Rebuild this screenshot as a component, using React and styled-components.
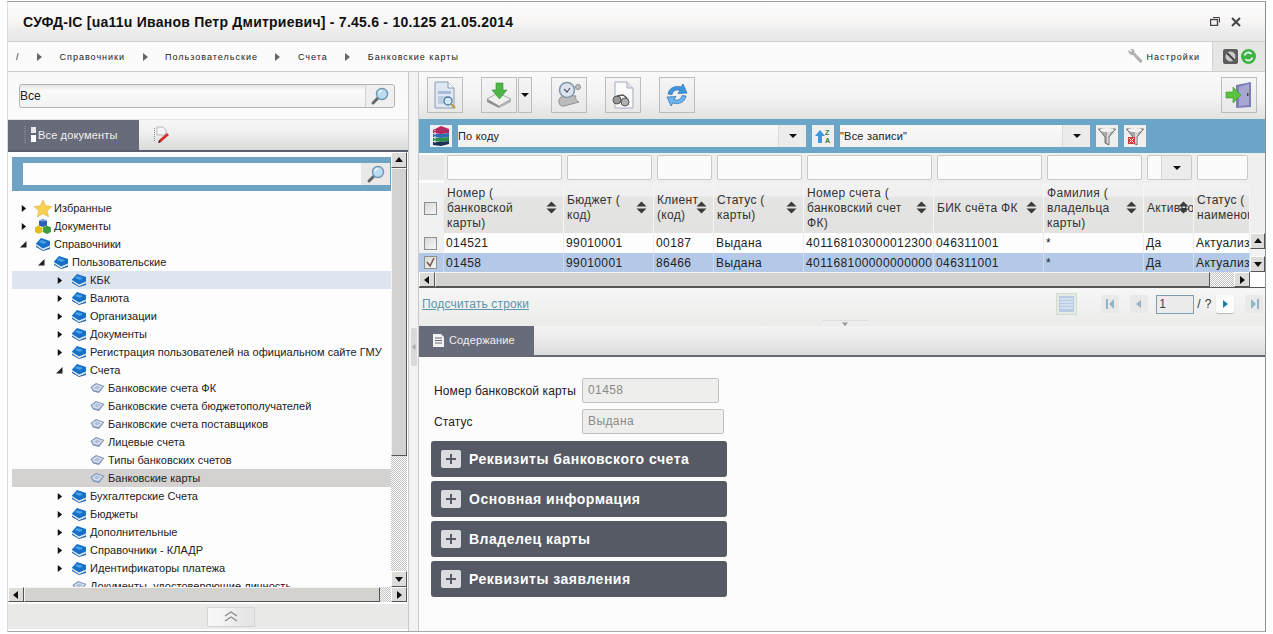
import React from 'react';
import styled, { createGlobalStyle } from 'styled-components';

const Global = createGlobalStyle`
  html, body { margin: 0; padding: 0; background: #fff; overflow: hidden; }
  body { font-family: "Liberation Sans", Arial, sans-serif; font-size: 11px; color: #222; }
`;

const Page = styled.div`
  width: 1273px; height: 634px; box-sizing: border-box;
  padding: 1px 7px 2px 7px; background: #fdfeff;
  border-left: 0; display: flex;
`;
const Win = styled.div`
  width: 1259px; display: flex; flex-direction: column;
  border-top: 1px solid #9a9fa3; border-right: 1px solid #8b8f92; border-bottom: 1px solid #a4a8a8;
  border-left: 1px solid #dcdcdc; box-sizing: border-box;
`;
const TitleBar = styled.div`
  height: 39px; flex: none; display: flex; align-items: center; justify-content: space-between;
  padding: 0 24px 0 15px; border-bottom: 1px solid #cfcfcf;
  background: linear-gradient(#fbfbfb 0, #f9f7f6 45%, #ececec 75%, #e7e7e7 100%);
`;
const Title = styled.div`
  font-size: 14px; font-weight: bold; color: #111; letter-spacing: .24px;
`;
const WinControls = styled.div` display: flex; align-items: center; gap: 11px; `;
const CrumbBar = styled.div`
  height: 30px; flex: none; display: flex; align-items: center;
  background: #fbfbfb; border-bottom: 1px solid #cdcdcd; box-sizing: border-box;
  padding-left: 8px;
`;
const Crumbs = styled.div` display: flex; align-items: center; gap: 17.5px; flex: 1; `;
const Crumb = styled.span` font-size: 9px; letter-spacing: 1px; color: #222; `;
const CrumbArrow = styled.i`
  width: 0; height: 0; border-left: 5px solid #666; border-top: 4px solid transparent; border-bottom: 4px solid transparent;
`;
const SettingsLink = styled.div`
  display: flex; align-items: center; gap: 3px; font-size: 9px; letter-spacing: 1.05px; margin-right: 12px;
`;
const StatusCell = styled.div`
  width: 52px; height: 29px; display: flex; align-items: center; justify-content: center; gap: 3px;
  background: #e6e6e4; border-left: 1px solid #d2d2d2;
`;

const Main = styled.div` flex: 1; display: flex; min-height: 0; `;
const LeftPanel = styled.div` width: 400px; flex: none; display: flex; flex-direction: column; background: #fdfdfd; `;
const LeftSearch = styled.div` height: 48px; flex: none; box-sizing: border-box; padding: 12px 13px 0 11px; background: linear-gradient(#f8f8f8, #fbfbfb); border-bottom: 1px solid #e4e4e4; `;
const SearchBox = styled.div`
  height: 24px; display: flex; box-sizing: border-box; border: 1px solid #b4b4b4; border-radius: 3px; overflow: hidden;
  background: linear-gradient(#e4e4e4, #fafafa 25%, #f2f2f2);
`;
const SearchText = styled.div` flex: 1; padding-left: 0; line-height: 22px; font-size: 12px; color: #222; `;
const SearchBtn = styled.div`
  width: 28px; display: flex; align-items: center; justify-content: center; background: #efefef; border-left: 1px solid #cfcfcf;
`;
const TabBar = styled.div`
  height: 32px; flex: none; display: flex; box-sizing: border-box; border-bottom: 2px solid #5b5f6b;
  background: linear-gradient(#f6f6f6, #efefef 45%, #d9d9d9);
`;
const ActiveTab = styled.div`
  width: ${p => p.$w}px; display: flex; align-items: center; gap: ${p => p.$gap}px; padding-left: ${p => p.$pad}px; padding-bottom: 1px; box-sizing: border-box;
  background: #686c7a; color: #f0f0f0; font-size: 11px; letter-spacing: .15px;
`;
const IdleTab = styled.div` width: 40px; display: flex; align-items: center; justify-content: center; margin-left: 2px; `;
const TreeWrap = styled.div` flex: 1; min-height: 0; display: flex; padding: 0 1px 0 4px; `;
const TreePane = styled.div` flex: 1; min-width: 0; display: flex; flex-direction: column; overflow: hidden; padding-top: 5px; `;
const TreeFilter = styled.div`
  height: 34px; flex: none; background: #6fa3c4; padding: 6px 1px 6px 11px; box-sizing: border-box; display: flex;
`;
const TreeInput = styled.div` flex: 1; background: #fdfdfd; `;
const TreeBtn = styled.div` width: 29px; background: #e9e9e9; display: flex; align-items: center; justify-content: center; `;
const TreeList = styled.div` flex: 1; padding-top: 8px; overflow: hidden; `;
const TreeRow = styled.div`
  height: 18px; display: flex; align-items: center; white-space: nowrap; font-size: 11px; letter-spacing: .03px; color: #222;
  padding-left: ${p => 6 + p.$level * 18}px;
  background: ${p => (p.$mark === 'hover' ? '#dce5f0' : p.$mark === 'sel' ? '#d3d2d0' : 'transparent')};
`;
const Toggle = styled.div` width: 10px; flex: none; display: flex; align-items: center; padding-left: 2px; box-sizing: border-box; `;
const NodeIcon = styled.div` width: 18px; margin-left: 6px; margin-right: 2px; flex: none; display: flex; align-items: center; justify-content: center; `;

const VBar = styled.div` width: ${p => p.$w}px; flex: none; display: flex; flex-direction: column; `;
const HBar = styled.div` height: 15px; flex: none; display: flex; `;
const ScrollBtn = styled.div`
  width: ${p => p.$w || 16}px; height: ${p => p.$h || 16}px; flex: none; display: flex; align-items: center; justify-content: center;
  background: #dedcd8; border-right: 1px solid #555; border-bottom: 1px solid #555; border-top: 1px solid #fff; border-left: 1px solid #fff; box-sizing: border-box;
`;
const Thumb = styled.div`
  flex: ${p => p.$size}; min-width: 0; min-height: 0; background: #d3d2cf;
  border-right: 1px solid #555; border-bottom: 1px solid #555; border-top: 1px solid #f4f4f4; border-left: 1px solid #f4f4f4; box-sizing: border-box;
`;
const Hatch = styled.div`
  flex: ${p => p.$size}; min-width: 0; min-height: 0;
  background: repeating-conic-gradient(#c4c4c4 0 25%, #fafafa 0 50%) 0 0 / 2px 2px;
`;
const Corner = styled.div` flex: 1; background: #fff; `;
const LeftFooter = styled.div`
  height: 25px; flex: none; display: flex; align-items: center; background: #e9e9e8; padding-left: 199px; margin: 2px 0;
`;
const Collapse = styled.div`
  width: 48px; height: 20px; box-sizing: border-box; border: 1px solid #d5d5d5; background: linear-gradient(90deg, #f8f8f8, #f4f4f4 30%, #e6e6e6 80%);
  display: flex; align-items: center; justify-content: center;
`;

const Splitter = styled.div`
  width: 10px; flex: none; display: flex; align-items: center; box-sizing: border-box;
  background: #f2f2f2; border-left: 1px solid #c9c9c9;
`;
const SplitHandle = styled.div`
  width: 6px; height: 38px; margin: 0 auto 10px; background: #d9d9d9; border-radius: 2px; display: flex; align-items: center; justify-content: center;
`;

const RightPanel = styled.div` flex: 1; min-width: 0; display: flex; flex-direction: column; background: #fcfcfc; border-left: 1px solid #c9c9c9; `;
const Toolbar = styled.div`
  height: 47px; flex: none; box-sizing: border-box; padding: 5px 8px 0 8px; display: flex; gap: 18px;
  background: linear-gradient(#f9f9f9, #f3f3f3 55%, #e2e2e2);
`;
const ToolBtn = styled.div`
  width: 36px; height: 36px; box-sizing: border-box; border: 1px solid #bdbdbd; display: flex; align-items: center; justify-content: center;
  background: linear-gradient(#f5f5f5, #e8e8e8);
  margin-left: ${p => (p.$end ? 'auto' : '0')};
`;
const SplitGroup = styled.div` display: flex; gap: 1px; margin-right: 1px; `;
const DropBtn = styled(ToolBtn)` width: 14px; `;
const Caret = styled.i`
  width: 0; height: 0; border-top: 4px solid #111; border-left: 4px solid transparent; border-right: 4px solid transparent;
`;
const BlueBar = styled.div`
  height: 34px; flex: none; box-sizing: border-box; background: #6ba5c8; padding: 6px 0 0 11px; display: flex; gap: 6px;
`;
const BlueBtn = styled.div`
  width: 22px; height: 22px; flex: none; background: #efefef; display: flex; align-items: center; justify-content: center;
`;
const Combo = styled.div`
  width: ${p => p.$w}px; height: 22px; flex: none; display: flex; background: linear-gradient(#fafafa, #f0f0f0);
`;
const ComboText = styled.div` flex: 1; line-height: 22px; font-size: 11px; letter-spacing: .2px; white-space: nowrap; color: #222; padding-left: 0; `;
const ComboArrow = styled.div`
  width: 27px; display: flex; align-items: center; justify-content: center; background: #ececec; border-left: 1px solid #d8d8d8;
`;

const TableArea = styled.div` display: flex; flex: none; `;
const Grid = styled.div`
  width: 831px; display: grid; grid-template-columns: 25px 120px 90px 60px 90px 130px 110px 100px 50px 56px;
  grid-template-rows: 30px 50px 20px 19px;
`;
const FilterCell = styled.div`
  background: #efefef; padding: 2px 2px 3px 3px; box-sizing: border-box; min-width: 0;
`;
const FilterStub = styled.div` background: #e9e9e9; margin-top: 2px; margin-bottom: 3px; `;
const FilterInput = styled.div`
  height: 100%; box-sizing: border-box; background: #fbfbfb; border: 1px solid #c9c9c9; border-radius: 2px; display: flex; justify-content: flex-end; overflow: hidden;
`;
const FilterArrow = styled.div`
  width: 29px; display: flex; align-items: center; justify-content: center; background: #ececec; border-left: 1px solid #d4d4d4;
`;
const HeadCell = styled.div`
  position: relative; box-sizing: border-box; min-width: 0; overflow: hidden; display: flex; align-items: center;
  padding: 0 ${p => (p.$tight ? 0 : 16)}px 0 3px; white-space: pre-line; font-size: 12px; line-height: 15px; letter-spacing: .3px; color: #333;
  background: linear-gradient(#f2f2f2, #efefef 25%, #e4e4e2 30%, #e2e2e0); border-right: 1px solid #f6f6f6;
`;
const SortMark = styled.svg` position: absolute; right: ${p => p.$right}px; top: 18px; `;
const Cell = styled.div`
  box-sizing: border-box; min-width: 0; overflow: hidden; white-space: nowrap; display: flex; align-items: center;
  padding-left: 2px; font-size: 12px; letter-spacing: .4px; color: #222;
  background: ${p => (p.$sel ? '#b4c9e8' : '#fdfdfd')}; border-right: 1px solid ${p => (p.$sel ? '#cddcf0' : '#ededed')};
`;
const CheckCell = styled(Cell)` justify-content: center; padding: 0 2px 0 0; background: ${p => (p.$sel ? '#b4c9e8' : '#f1f1f1')}; `;
const Check = styled.div`
  width: 13px; height: 13px; box-sizing: border-box; border: 1px solid #8f8f8f; background: linear-gradient(135deg, #d8d8d8, #f6f6f6);
  display: flex; align-items: center; justify-content: center;
`;
const SideSpacer = styled.div` height: 80px; background: #efefef; flex: none; `;
const RowScroll = styled.div` flex: 1; display: flex; flex-direction: column; justify-content: space-between; background: #f2f2f2; `;
const HBarWrap = styled.div` height: 15px; flex: none; display: flex; border-bottom: 1px solid #555; box-sizing: content-box; `;
const HBarTrack = styled.div` width: 831px; display: flex; flex: none; `;
const PagerBar = styled.div`
  height: 38px; flex: none; box-sizing: border-box; display: flex; align-items: center; padding: 0 2px 6px 3px; position: relative;
  background: linear-gradient(#f6f6f6, #ebebe9);
`;
const CountLink = styled.span` font-size: 12px; letter-spacing: .15px; color: #5b95ae; text-decoration: underline; `;
const Pager = styled.div` margin-left: auto; display: flex; align-items: center; `;
const ListBtn = styled.div`
  width: 21px; height: 22px; box-sizing: border-box; margin-right: 24px; background: #e4ebe2; border: 1px solid #d4dcd2; display: flex; align-items: center; justify-content: center;
`;
const PageBtn = styled.div`
  width: 18px; height: 18px; display: flex; align-items: center; justify-content: center; margin-left: ${p => p.$gap}px; border-radius: 2px;
  background: ${p => (p.$on ? '#fdfdfd' : '#e9e9e9')}; box-shadow: ${p => (p.$on ? '0 1px 1px #bbb' : 'none')};
`;
const PageInput = styled.div`
  width: 38px; height: 19px; box-sizing: border-box; margin-left: 8px; border: 1px solid #7f9db5; background: #ececec; font-size: 12px; line-height: 17px; padding-left: 2px; color: #444;
`;
const PageOf = styled.span` font-size: 12px; margin-left: 3px; color: #333; letter-spacing: .5px; `;
const PaneHandle = styled.div`
  position: absolute; left: 403px; bottom: 0; width: 46px; height: 5px; background: #ededed; border-top: 1px solid #ddd; display: flex; justify-content: center;
`;
const ContentTabs = styled(TabBar)` height: 31px; border-bottom: 2px solid #666a76; background: linear-gradient(#f3f3f3, #ececec 40%, #dcdcdc); `;
const Content = styled.div` flex: 1; padding: 21px 0 0 12px; background: #fcfcfc; `;
const FormRow = styled.div` display: flex; align-items: center; margin-bottom: 6px; height: 25px; `;
const FormLabel = styled.div` width: 151px; padding-left: 3px; box-sizing: border-box; font-size: 12px; letter-spacing: .12px; color: #222; flex: none; `;
const FormInput = styled.div`
  width: ${p => p.$w}px; height: 25px; box-sizing: border-box; background: #eeeeec; border: 1px solid #c0c0c0; border-radius: 2px;
  font-size: 12px; letter-spacing: .4px; color: #8a8a8a; line-height: 23px; padding-left: 5px;
`;
const Sections = styled.div` display: flex; flex-direction: column; gap: 4px; width: 296px; margin-top: 7px; `;
const Section = styled.div`
  height: 36px; display: flex; align-items: center; gap: 8px; padding-left: 10px; background: #555a64; border-radius: 3px;
  color: #fff; font-weight: bold; font-size: 14px; letter-spacing: .5px;
`;
const Plus = styled.div`
  width: 20px; height: 18px; border-radius: 2px; background: #dadce0; display: flex; align-items: center; justify-content: center;
`;

/* drawings */
const Arrow = ({ dir = 'r', c = '#111', s = 8 }) => {
  const p = { r: '2,0 7,4 2,8', l: '6,0 1,4 6,8', u: '0,6 4,1 8,6', d: '0,2 4,7 8,2' }[dir];
  return <svg width={s} height={s} viewBox="0 0 8 8"><polygon points={p} fill={c} /></svg>;
};
const OpenArrow = () => <svg width="7" height="7" viewBox="0 0 7 7"><polygon points="0,6.5 6.5,6.5 6.5,0" fill="#222" /></svg>;
const Lens = ({ s = 20 }) => (
  <svg width={s} height={s} viewBox="0 0 20 20">
    <path d="M9 11 3 17" stroke="#666" strokeWidth="3" strokeLinecap="round" />
    <circle cx="12" cy="8" r="5.5" fill="#bcdcf2" stroke="#6f97b2" strokeWidth="1.4" />
    <path d="M9 7a3.5 3.5 0 0 1 3-2.5" stroke="#fff" strokeWidth="1.3" fill="none" />
  </svg>
);
const Star = () => <svg width="18" height="17" viewBox="0 0 18 17"><polygon points="9,0 11.6,5.8 18,6.5 13.2,10.7 14.6,17 9,13.7 3.4,17 4.8,10.7 0,6.5 6.4,5.8" fill="#f8cf52" stroke="#e0b040" strokeWidth=".6" /></svg>;
const Cubes = () => (
  <svg width="16" height="15" viewBox="0 0 16 15">
    <polygon points="8,0 12,2 12,6.500 8,8 4,6.500 4,2" fill="#2f5fb5" />
    <polygon points="8,2.500 4,1.500 8,0 12,1.500" fill="#7ea3e0" />
    <polygon points="3.500,6.500 7.500,8.500 7.500,13 3.500,15 0,13 0,8.500" fill="#e2bd22" />
    <polygon points="12,6.500 16,8.500 16,13 12,15 8,13 8,8.500" fill="#3f9e3c" />
  </svg>
);
const Book = () => (
  <svg width="16" height="14" viewBox="0 0 16 14">
    <polygon points="1,8 8,13 15,10 15,12 8,14 1,10" fill="#2b6aa8" />
    <polygon points="1,7 8,11.500 15,8.500 15,10 8,13 1,8.500" fill="#dde6ee" />
    <polygon points="1,6.500 6,1 15,4 15,8.500 8,11.500 1,7" fill="#1670c8" />
    <polygon points="6,3 12,5 9,7 4,5" fill="#4aa0e8" />
  </svg>
);
const OpenBook = () => (
  <svg width="15" height="12" viewBox="0 0 15 12">
    <polygon points="0.5,5 6,1 14.5,4 9,11 3,9.5" fill="#7f93b8" />
    <polygon points="2,5 6.5,2.2 13,4.5 8.5,9.300 3.5,8" fill="#d2dcec" />
    <path d="M4.5 5.5 8 6.5M6 4.5 10 5.5" stroke="#8ea2c2" strokeWidth=".8" />
  </svg>
);
const Restore = () => (
  <svg width="10" height="9" viewBox="0 0 10 9" fill="none" stroke="#444">
    <rect x=".5" y="2.5" width="7" height="6" strokeWidth="1.4" />
    <path d="M3 .5h6.5v5" />
  </svg>
);
const Cross = () => <svg width="10" height="10" viewBox="0 0 10 10"><path d="M1 1 9 9M9 1 1 9" stroke="#444" strokeWidth="2" /></svg>;
const Wrench = () => (
  <svg width="15" height="15" viewBox="0 0 15 15">
    <path d="M1 1.5 3 3.5 4.5 2 2.8.3C5-.4 6.5 1.4 6 3.5L13.5 11c1 1 0 3-1.6 2.3L5 5.5C3 6.3.4 4.3 1 1.5Z" fill="#b5b5b5" stroke="#8a8a8a" strokeWidth=".5" />
  </svg>
);
const StopIcon = () => (
  <svg width="15" height="15" viewBox="0 0 15 15">
    <rect width="15" height="15" rx="2" fill="#5c5c5c" />
    <circle cx="7.5" cy="7.5" r="5" fill="#c9c9c9" />
    <path d="M4 4 11 11" stroke="#444" strokeWidth="2" />
  </svg>
);
const GreenSync = () => (
  <svg width="15" height="15" viewBox="0 0 15 15">
    <circle cx="7.5" cy="7.5" r="7.5" fill="#3cb53f" />
    <path d="M3.5 6.5a4 4 0 0 1 7-1.5M11.5 8.5a4 4 0 0 1-7 1.5" stroke="#eef" strokeWidth="1.8" fill="none" />
  </svg>
);
const TabPages = () => (
  <svg width="14" height="20" viewBox="0 0 14 20">
    <path d="M2 1v18" stroke="#999" strokeDasharray="1 1" />
    <rect x="8" y="2" width="5" height="6" fill="#e8e8e8" />
    <rect x="8" y="10" width="5" height="7" fill="#fff" />
  </svg>
);
const TabEdit = () => (
  <svg width="16" height="18" viewBox="0 0 16 18">
    <path d="M1.5 2v14" stroke="#888" strokeDasharray="1 1" />
    <path d="M4 1h6l3 3v5H4Z" fill="#f4f4f4" stroke="#bbb" />
    <path d="M14 7 6 14l-1 3 3-1 8-7Z" fill="#d63030" />
    <path d="M5 17l1.4-2.6L8 16Z" fill="#222" />
  </svg>
);
const DocLens = () => (
  <svg width="24" height="28" viewBox="0 0 24 28">
    <path d="M2 1h13l6 6v20H2Z" fill="#dfe7f2" stroke="#8c9db4" />
    <path d="M15 1v6h6" fill="#f4f6fa" stroke="#8c9db4" />
    <rect x="5" y="10" width="13" height="3" fill="#a8bcd6" />
    <rect x="5" y="15" width="8" height="8" fill="#bccde2" />
    <circle cx="15" cy="20" r="4" fill="#d2e7f6" stroke="#4f7aa0" strokeWidth="1.3" />
    <path d="M18 23 22 27" stroke="#b89a3e" strokeWidth="2" />
  </svg>
);
const Download = () => (
  <svg width="26" height="26" viewBox="0 0 26 26">
    <polygon points="1,17 12,11 25,17 13,24" fill="#efefef" stroke="#aaa" />
    <polygon points="1,17 13,24 13,26 1,20" fill="#8f8f8f" />
    <polygon points="13,24 25,17 25,20 13,26" fill="#b0b0b0" />
    <polygon points="10,1 17,1 17,8 21,8 13.5,17 6,8 10,8" fill="#4fb548" stroke="#3b8f35" strokeWidth=".6" />
  </svg>
);
const ScrollClock = () => (
  <svg width="26" height="28" viewBox="0 0 26 28">
    <path d="M4 17c-3 4 0 9 4 8l15-4c-3-1-4-4-3-6L8 14Z" fill="#bcbcbc" stroke="#8f8f8f" />
    <circle cx="11" cy="9" r="7.5" fill="#dbe4ee" stroke="#8496a8" strokeWidth="1.6" />
    <path d="M8 8l3 3 3-4" stroke="#556" strokeWidth="1.2" fill="none" />
    <circle cx="22" cy="6" r="2.5" fill="#c0c0c0" stroke="#8f8f8f" />
  </svg>
);
const DocGlasses = () => (
  <svg width="24" height="28" viewBox="0 0 24 28">
    <path d="M4 1h12l6 6v20H4Z" fill="#fafafa" stroke="#a3adba" />
    <path d="M16 1v6h6" fill="#e4e8ee" stroke="#a3adba" />
    <circle cx="6" cy="19" r="4" fill="#9a9a9a" stroke="#555" />
    <circle cx="14" cy="21" r="4" fill="#b0b0b0" stroke="#555" />
    <path d="M6 15 12 14 16 17" stroke="#555" strokeWidth="1.5" fill="none" />
  </svg>
);
const Refresh = () => (
  <svg width="26" height="26" viewBox="0 0 26 26" fill="none">
    <path d="M4 12C5 6 11 3 17 5l2-3 4 9-9 .5 2-3c-4-1.500-7 0-8 4Z" fill="#3f96dd" stroke="#2a6fae" strokeWidth=".7" />
    <path d="M22 14c-1 6-7 9-13 7l-2 3-4-9 9-.5-2 3c4 1.500 7 0 8-4Z" fill="#6db4ec" stroke="#2a6fae" strokeWidth=".7" />
  </svg>
);
const ExitDoor = () => (
  <svg width="28" height="28" viewBox="0 0 28 28">
    <polygon points="11,4 26,1 26,26 11,27" fill="#7d7fb5" />
    <polygon points="14,6 24,3 24,24 14,25" fill="#a6a8d0" />
    <rect x="22" y="12" width="1.500" height="3" fill="#444" />
    <polygon points="1,11 8,11 8,6 16,14 8,22 8,17 1,17" fill="#58c33f" stroke="#3a962a" strokeWidth=".6" />
  </svg>
);
const Stack = () => (
  <svg width="18" height="20" viewBox="0 0 18 20">
    <polygon points="1,4 9,0 17,3 17,7 9,8 1,7" fill="#b02a5e" />
    <polygon points="1,8 9,8 17,7 17,11 9,12 1,11" fill="#2d6cb4" />
    <polygon points="1,12 9,12 17,11 17,15 9,16 1,15" fill="#2e8f4a" />
    <polygon points="1,16 9,16 17,15 17,18 9,20 1,19" fill="#1e2f55" />
    <path d="M3 2v16" stroke="#eee" strokeDasharray="1 1" />
  </svg>
);
const SortAZ = () => (
  <svg width="18" height="16" viewBox="0 0 18 16">
    <polygon points="1,8 6,2 11,8 8,8 8,15 4,15 4,8" fill="#3c97dd" />
    <text x="11" y="7" fontSize="7" fontWeight="bold" fontFamily="Liberation Sans" fill="#2f7f3a">Z</text>
    <text x="11" y="15" fontSize="7" fontWeight="bold" fontFamily="Liberation Sans" fill="#2f7f3a">A</text>
  </svg>
);
const Funnel = ({ x }) => (
  <svg width="18" height="19" viewBox="0 0 18 19">
    <polygon points="0.500,2 17.500,2 11,10 11,18 7,16 7,10" fill="#a8a8a8" stroke="#6f6f6f" />
    <ellipse cx="9" cy="3" rx="7" ry="2" fill="#f2f2f2" />
    <polygon points="9,5 13,5 10.500,10 10.500,17 9,16" fill="#d6d6d6" />
    {x && <rect x="2" y="10" width="7" height="7" fill="#d63a3a" />}
    {x && <path d="M3 11 8 16M8 11 3 16" stroke="#f6dada" strokeWidth="1" />}
  </svg>
);
const SortGlyph = ({ right = 6 }) => (
  <SortMark $right={right} width="11" height="13" viewBox="0 0 11 13">
    <polygon points="0.500,5.500 5.500,0.500 10.500,5.500" fill="#3a3a3a" />
    <polygon points="0.500,7.500 5.500,12.500 10.500,7.500" fill="#3a3a3a" />
  </SortMark>
);
const Tick = () => <svg width="11" height="11" viewBox="0 0 11 11"><path d="M2 5 5 9 9 1" stroke="#7a5a50" strokeWidth="1.600" fill="none" /></svg>;
const ListIcon = () => (
  <svg width="15" height="16" viewBox="0 0 15 16">
    <rect width="15" height="16" fill="#b9cbe4" />
    <path d="M1 3h13M1 6h13M1 9h13M1 12h13" stroke="#eef3fa" strokeWidth="1" />
  </svg>
);
const PageEdge = ({ flip, c = '#8fb4c8' }) => (
  <svg width="9" height="10" viewBox="0 0 9 10" style={flip ? { transform: 'scaleX(-1)' } : undefined}>
    <rect x="0" y="0" width="2" height="10" fill={c} />
    <polygon points="8,0 3,5 8,10" fill={c} />
  </svg>
);
const DocSmall = () => (
  <svg width="11" height="13" viewBox="0 0 11 13">
    <path d="M0 0h8l3 3v10H0Z" fill="#f2f2f2" />
    <path d="M2 4h7M2 6.500h7M2 9h7" stroke="#666a76" />
  </svg>
);
const Chevrons = () => (
  <svg width="14" height="11" viewBox="0 0 14 11" fill="none" stroke="#8a8a8a" strokeWidth="1.300">
    <path d="M1 5 7 1l6 4M1 10l6-4 6 4" />
  </svg>
);

const nodes = [
  [0, 'star', 'Избранные', 'c'],
  [0, 'cubes', 'Документы', 'c'],
  [0, 'book', 'Справочники', 'o'],
  [1, 'book', 'Пользовательские', 'o'],
  [2, 'book', 'КБК', 'c', 'hover'],
  [2, 'book', 'Валюта', 'c'],
  [2, 'book', 'Организации', 'c'],
  [2, 'book', 'Документы', 'c'],
  [2, 'book', 'Регистрация пользователей на официальном сайте ГМУ', 'c'],
  [2, 'book', 'Счета', 'o'],
  [3, 'open', 'Банковские счета ФК'],
  [3, 'open', 'Банковские счета бюджетополучателей'],
  [3, 'open', 'Банковские счета поставщиков'],
  [3, 'open', 'Лицевые счета'],
  [3, 'open', 'Типы банковских счетов'],
  [3, 'open', 'Банковские карты', null, 'sel'],
  [2, 'book', 'Бухгалтерские Счета', 'c'],
  [2, 'book', 'Бюджеты', 'c'],
  [2, 'book', 'Дополнительные', 'c'],
  [2, 'book', 'Справочники - КЛАДР', 'c'],
  [2, 'book', 'Идентификаторы платежа', 'c'],
  [2, 'open', 'Документы, удостоверяющие личность'],
];
const nodeIcons = { star: <Star />, cubes: <Cubes />, book: <Book />, open: <OpenBook /> };

const columns = [
  { title: 'Номер (\nбанковской\nкарты)' },
  { title: 'Бюджет (\nкод)' },
  { title: 'Клиент\n(код)' },
  { title: 'Статус (\nкарты)' },
  { title: 'Номер счета (\nбанковский счет\nФК)' },
  { title: 'БИК счёта ФК' },
  { title: 'Фамилия (\nвладельца\nкарты)' },
  { title: 'Активно', right: 4, tight: true },
  { title: 'Статус (\nнаименование', noSort: true, tight: true },
];
const rows = [
  ['014521', '99010001', '00187', 'Выдана', '401168103000012300', '046311001', '*', 'Да', 'Актуализирована'],
  ['01458', '99010001', '86466', 'Выдана', '401168100000000000', '046311001', '*', 'Да', 'Актуализирована'],
];
const crumbs = ['Справочники', 'Пользовательские', 'Счета', 'Банковские карты'];
const sections = ['Реквизиты банковского счета', 'Основная информация', 'Владелец карты', 'Реквизиты заявления'];

export default function App() {
  return (
    <Page>
      <Global />
      <Win>
        <TitleBar>
          <Title>СУФД-IC [ua11u Иванов Петр Дмитриевич] - 7.45.6 - 10.125 21.05.2014</Title>
          <WinControls><Restore /><Cross /></WinControls>
        </TitleBar>
        <CrumbBar>
          <Crumbs>
            <Crumb>/</Crumb>
            {crumbs.map(c => (
              <React.Fragment key={c}>
                <CrumbArrow />
                <Crumb>{c}</Crumb>
              </React.Fragment>
            ))}
          </Crumbs>
          <SettingsLink><Wrench />Настройки</SettingsLink>
          <StatusCell><StopIcon /><GreenSync /></StatusCell>
        </CrumbBar>
        <Main>
          <LeftPanel>
            <LeftSearch>
              <SearchBox>
                <SearchText>Все</SearchText>
                <SearchBtn><Lens /></SearchBtn>
              </SearchBox>
            </LeftSearch>
            <TabBar>
              <ActiveTab $w={131} $pad={15} $gap={1}><TabPages />Все документы</ActiveTab>
              <IdleTab><TabEdit /></IdleTab>
            </TabBar>
            <TreeWrap>
              <TreePane>
                <TreeFilter>
                  <TreeInput />
                  <TreeBtn><Lens /></TreeBtn>
                </TreeFilter>
                <TreeList>
                  {nodes.map(([level, icon, label, state, mark]) => (
                    <TreeRow key={label + level + icon} $level={level} $mark={mark}>
                      <Toggle>
                        {state === 'c' && <Arrow s={7} />}
                        {state === 'o' && <OpenArrow />}
                      </Toggle>
                      <NodeIcon>{nodeIcons[icon]}</NodeIcon>
                      {label}
                    </TreeRow>
                  ))}
                </TreeList>
              </TreePane>
              <VBar $w={16}>
                <ScrollBtn><Arrow dir="u" /></ScrollBtn>
                <Thumb $size={287} />
                <Hatch $size={115} />
                <ScrollBtn><Arrow dir="d" /></ScrollBtn>
              </VBar>
            </TreeWrap>
            <HBar>
              <ScrollBtn $h={15}><Arrow dir="l" /></ScrollBtn>
              <Thumb $size={341} />
              <Hatch $size={11} />
              <ScrollBtn $h={15}><Arrow dir="r" /></ScrollBtn>
              <Corner />
            </HBar>
            <LeftFooter>
              <Collapse><Chevrons /></Collapse>
            </LeftFooter>
          </LeftPanel>
          <Splitter>
            <SplitHandle><Arrow dir="l" c="#aaa" s={6} /></SplitHandle>
          </Splitter>
          <RightPanel>
            <Toolbar>
              <ToolBtn><DocLens /></ToolBtn>
              <SplitGroup>
                <ToolBtn><Download /></ToolBtn>
                <DropBtn><Caret /></DropBtn>
              </SplitGroup>
              <ToolBtn><ScrollClock /></ToolBtn>
              <ToolBtn><DocGlasses /></ToolBtn>
              <ToolBtn><Refresh /></ToolBtn>
              <ToolBtn $end><ExitDoor /></ToolBtn>
            </Toolbar>
            <BlueBar>
              <BlueBtn><Stack /></BlueBtn>
              <Combo $w={348}><ComboText>По коду</ComboText><ComboArrow><Caret /></ComboArrow></Combo>
              <BlueBtn><SortAZ /></BlueBtn>
              <Combo $w={250}><ComboText>"Все записи"</ComboText><ComboArrow><Caret /></ComboArrow></Combo>
              <BlueBtn><Funnel /></BlueBtn>
              <BlueBtn><Funnel x /></BlueBtn>
            </BlueBar>
            <TableArea>
              <Grid>
                <FilterStub />
                {columns.map((c, i) => (
                  <FilterCell key={c.title}>
                    <FilterInput>{i === 7 && <FilterArrow><Caret /></FilterArrow>}</FilterInput>
                  </FilterCell>
                ))}
                <CheckCell><Check /></CheckCell>
                {columns.map(c => (
                  <HeadCell key={c.title} $tight={c.tight}>
                    {c.title}
                    {!c.noSort && <SortGlyph right={c.right} />}
                  </HeadCell>
                ))}
                {rows.map((r, ri) => (
                  <React.Fragment key={r[0]}>
                    <CheckCell $sel={ri === 1}><Check>{ri === 1 && <Tick />}</Check></CheckCell>
                    {r.map((v, i) => <Cell key={i} $sel={ri === 1}>{v}</Cell>)}
                  </React.Fragment>
                ))}
              </Grid>
              <VBar $w={15}>
                <SideSpacer />
                <RowScroll>
                  <ScrollBtn $w={15}><Arrow dir="u" /></ScrollBtn>
                  <ScrollBtn $w={15}><Arrow dir="d" /></ScrollBtn>
                </RowScroll>
              </VBar>
            </TableArea>
            <HBarWrap>
              <HBarTrack>
                <ScrollBtn $h={15}><Arrow dir="l" /></ScrollBtn>
                <Thumb $size={775} />
                <Hatch $size={24} />
                <ScrollBtn $h={15}><Arrow dir="r" /></ScrollBtn>
              </HBarTrack>
              <Corner />
            </HBarWrap>
            <PagerBar>
              <CountLink>Подсчитать строки</CountLink>
              <Pager>
                <ListBtn><ListIcon /></ListBtn>
                <PageBtn $gap={0}><PageEdge /></PageBtn>
                <PageBtn $gap={11}><Arrow dir="l" c="#8fb4c8" /></PageBtn>
                <PageInput>1</PageInput>
                <PageOf>/ ?</PageOf>
                <PageBtn $gap={4} $on><Arrow dir="r" c="#1f7ea8" /></PageBtn>
                <PageBtn $gap={11}><PageEdge flip /></PageBtn>
              </Pager>
              <PaneHandle><Arrow dir="d" c="#999" s={6} /></PaneHandle>
            </PagerBar>
            <ContentTabs>
              <ActiveTab $w={115} $pad={14} $gap={5}><DocSmall />Содержание</ActiveTab>
            </ContentTabs>
            <Content>
              <FormRow><FormLabel>Номер банковской карты</FormLabel><FormInput $w={137}>01458</FormInput></FormRow>
              <FormRow><FormLabel>Статус</FormLabel><FormInput $w={142}>Выдана</FormInput></FormRow>
              <Sections>
                {sections.map(s => (
                  <Section key={s}>
                    <Plus>
                      <svg width="12" height="12" viewBox="0 0 12 12"><path d="M6 1v10M1 6h10" stroke="#555a64" strokeWidth="2" /></svg>
                    </Plus>
                    {s}
                  </Section>
                ))}
              </Sections>
            </Content>
          </RightPanel>
        </Main>
      </Win>
    </Page>
  );
}
